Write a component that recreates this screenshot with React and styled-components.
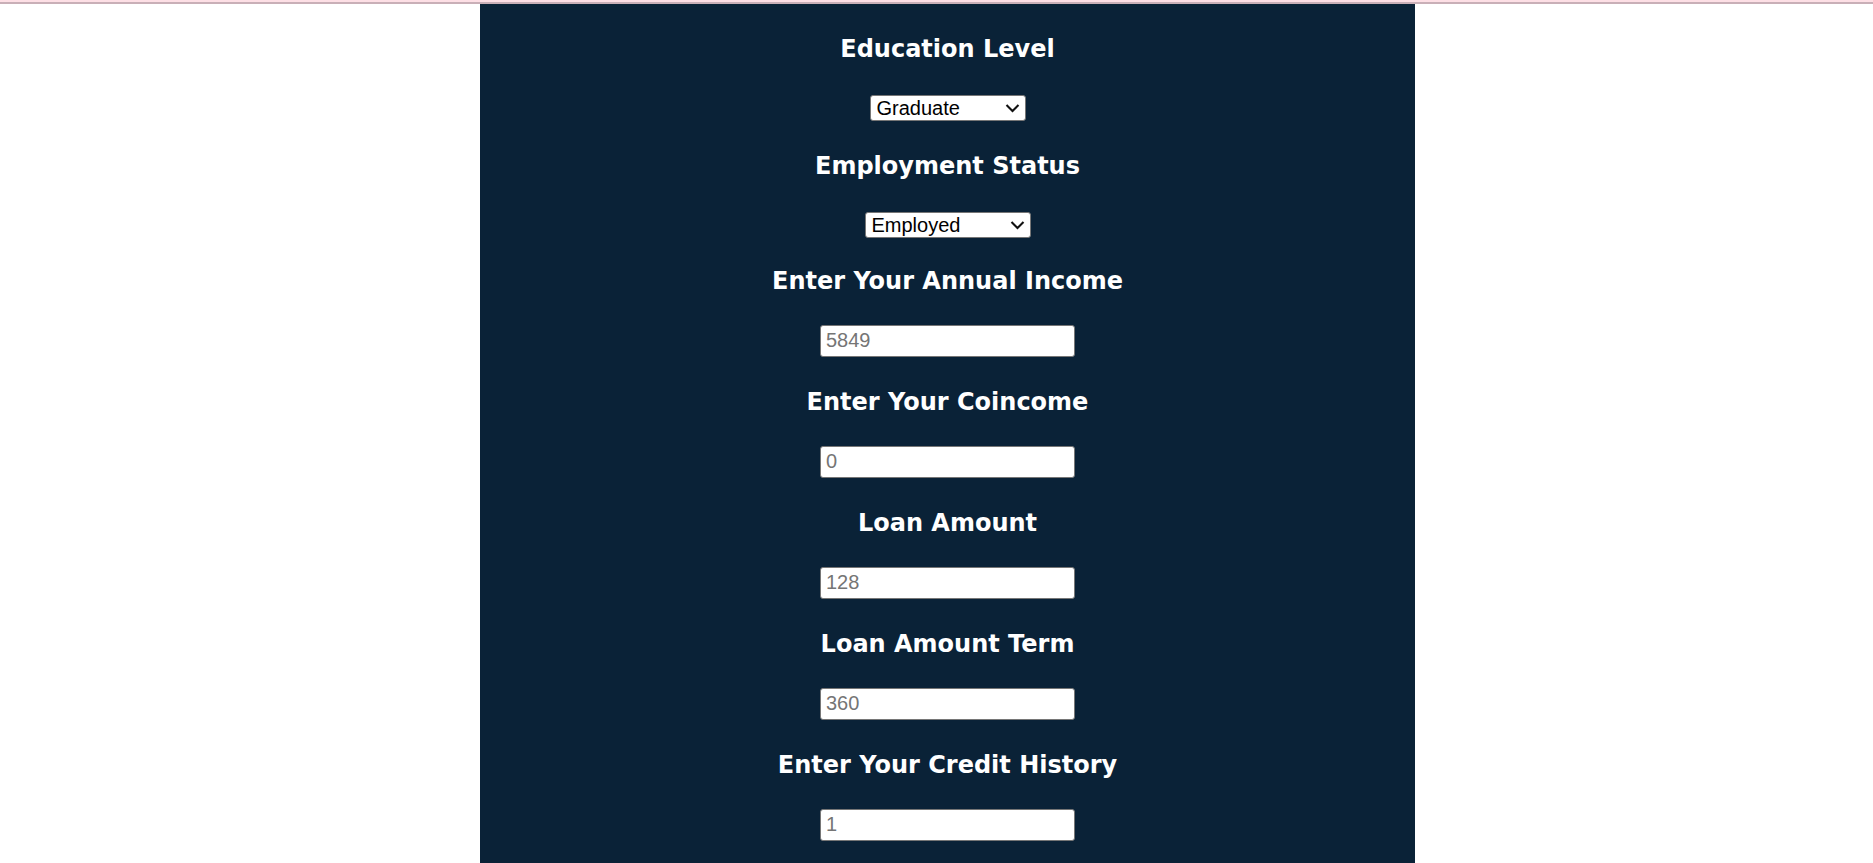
import React from 'react';
import styled, { createGlobalStyle } from 'styled-components';

const Global = createGlobalStyle`
  body { margin: 0; background: #fff; overflow: hidden; }
`;
const TopRule = styled.header`
  height: 2px;
  background: #fddfe5;
  border-bottom: 2px solid #c9afb7;
`;
const Panel = styled.form`
  margin: 0 458px 0 480px;
  padding: 29px 0 28px;
  background: #0a2237;
  display: flex;
  flex-direction: column;
  gap: 27px;
`;
const Group = styled.div`
  display: flex;
  flex-direction: column;
  gap: 29px;
`;
const Field = styled.div`
  display: flex;
  flex-direction: column;
  align-items: center;
  gap: ${(p) => p.$gap}px;
`;
const Label = styled.label`
  color: #fff;
  font: bold 24px/32px Verdana, "DejaVu Sans", sans-serif;
`;
const SelectBox = styled.div`
  position: relative;
  display: flex;
`;
const Select = styled.select`
  appearance: none;
  box-sizing: border-box;
  width: ${(p) => p.$width}px;
  height: 26px;
  margin: 0;
  padding: 0 28px 0 6px;
  border: 1px solid #767676;
  border-radius: 3px;
  background: #fff;
  color: #000;
  font: 20px/24px "Liberation Sans", Arial, sans-serif;
`;
const Chevron = styled.svg`
  position: absolute;
  right: 6px;
  top: 8px;
  width: 15px;
  height: 10px;
  pointer-events: none;
`;
const Input = styled.input`
  box-sizing: border-box;
  width: 255px;
  height: 32px;
  margin: 0;
  padding: 0 5px 2px;
  border: 1px solid #767676;
  border-radius: 3px;
  background: #fff;
  font: 20px "Liberation Sans", Arial, sans-serif;
  &::placeholder { color: #757575; }
`;

const selects = [
  { id: 'education', label: 'Education Level', width: 156, options: ['Graduate', 'Not Graduate'] },
  { id: 'employment', label: 'Employment Status', width: 166, options: ['Employed', 'Self Employed'] },
];
const inputs = [
  { id: 'income', label: 'Enter Your Annual Income', placeholder: '5849' },
  { id: 'coincome', label: 'Enter Your Coincome', placeholder: '0' },
  { id: 'amount', label: 'Loan Amount', placeholder: '128' },
  { id: 'term', label: 'Loan Amount Term', placeholder: '360' },
  { id: 'credit', label: 'Enter Your Credit History', placeholder: '1' },
];

export default function App() {
  return (
    <>
      <Global />
      <TopRule />
      <Panel>
        <Group>
          {selects.map((s) => (
            <Field key={s.id} $gap={30}>
              <Label htmlFor={s.id}>{s.label}</Label>
              <SelectBox>
                <Select id={s.id} $width={s.width}>
                  {s.options.map((o) => <option key={o}>{o}</option>)}
                </Select>
                <Chevron viewBox="0 0 15 10" aria-hidden="true">
                  <path d="M1.5 2 L7.5 8 L13.5 2" fill="none" stroke="#111" strokeWidth="2.1" />
                </Chevron>
              </SelectBox>
            </Field>
          ))}
        </Group>
        <Group>
          {inputs.map((f) => (
            <Field key={f.id} $gap={28}>
              <Label htmlFor={f.id}>{f.label}</Label>
              <Input id={f.id} type="text" placeholder={f.placeholder} />
            </Field>
          ))}
        </Group>
      </Panel>
    </>
  );
}
